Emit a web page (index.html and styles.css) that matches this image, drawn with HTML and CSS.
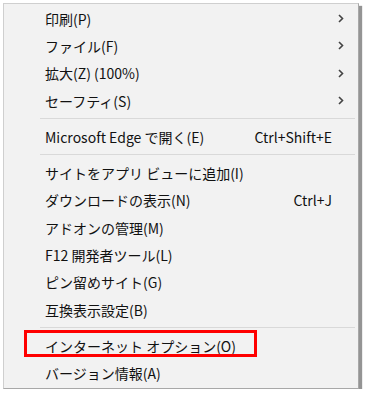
FILE: index.html
```html
<!DOCTYPE html>
<html lang="ja">
<head>
    <meta charset="UTF-8">
    <meta name="viewport" content="width=device-width, initial-scale=1.0">
    <title>ツール メニュー</title>
    <link rel="stylesheet" href="styles.css">
</head>
<body>
    <div class="menu">
        <div class="item"><span class="label">印刷(P)</span><span class="key"></span><span class="arrow"><svg width="6" height="9" viewBox="0 0 6 9"><path d="M1 1 L4.5 4.5 L1 8" fill="none" stroke="#444" stroke-width="1.6"/></svg></span></div>
        <div class="item"><span class="label">ファイル(F)</span><span class="key"></span><span class="arrow"><svg width="6" height="9" viewBox="0 0 6 9"><path d="M1 1 L4.5 4.5 L1 8" fill="none" stroke="#444" stroke-width="1.6"/></svg></span></div>
        <div class="item"><span class="label">拡大(Z) (100%)</span><span class="key"></span><span class="arrow"><svg width="6" height="9" viewBox="0 0 6 9"><path d="M1 1 L4.5 4.5 L1 8" fill="none" stroke="#444" stroke-width="1.6"/></svg></span></div>
        <div class="item"><span class="label">セーフティ(S)</span><span class="key"></span><span class="arrow"><svg width="6" height="9" viewBox="0 0 6 9"><path d="M1 1 L4.5 4.5 L1 8" fill="none" stroke="#444" stroke-width="1.6"/></svg></span></div>
        <div class="sep"></div>
        <div class="item"><span class="label">Microsoft Edge で開く(E)</span><span class="key">Ctrl+Shift+E</span><span class="arrow"></span></div>
        <div class="sep"></div>
        <div class="item"><span class="label">サイトをアプリ ビューに追加(I)</span><span class="key"></span><span class="arrow"></span></div>
        <div class="item"><span class="label">ダウンロードの表示(N)</span><span class="key">Ctrl+J</span><span class="arrow"></span></div>
        <div class="item"><span class="label">アドオンの管理(M)</span><span class="key"></span><span class="arrow"></span></div>
        <div class="item"><span class="label">F12 開発者ツール(L)</span><span class="key"></span><span class="arrow"></span></div>
        <div class="item"><span class="label">ピン留めサイト(G)</span><span class="key"></span><span class="arrow"></span></div>
        <div class="item"><span class="label">互換表示設定(B)</span><span class="key"></span><span class="arrow"></span></div>
        <div class="sep"></div>
        <div class="item marked"><span class="label">インターネット オプション(O)</span><span class="key"></span><span class="arrow"></span></div>
        <div class="item"><span class="label">バージョン情報(A)</span><span class="key"></span><span class="arrow"></span></div>
    </div>
</body>
</html>
```

FILE: styles.css
```css
body {
    margin: 0;
    background: #fff;
    font-family: "Noto Sans CJK JP", "Noto Sans", sans-serif;
    font-size: 14px;
    color: #111;
}

.menu {
    margin: 3px 0 0 3px;
    width: 356px;
    box-sizing: border-box;
    padding: 1px 0 1px;
    background: #f2f2f2;
    border: 1px solid #cfcfcf;
    border-right-color: #a8a8a8;
    border-bottom-color: #a8a8a8;
    box-shadow: 3px 3px 1px rgba(0, 0, 0, 0.42);
}

.item {
    display: grid;
    grid-template-columns: 1fr auto 26px;
    align-items: center;
    height: 27.3px;
    padding-left: 41px;
    position: relative;
}

.label,
.key {
    white-space: nowrap;
    line-height: 1;
}

.arrow {
    display: flex;
    align-items: center;
    padding-left: 6px;
}

.arrow svg {
    display: block;
}

.sep {
    height: 1px;
    margin: 4px 3px 4px 36px;
    background: #d9d9d9;
}

.marked::after {
    content: '';
    position: absolute;
    left: 20px;
    top: -2px;
    width: 233px;
    height: 27px;
    box-sizing: border-box;
    border: 3px solid #ff0000;
    pointer-events: none;
}
```
